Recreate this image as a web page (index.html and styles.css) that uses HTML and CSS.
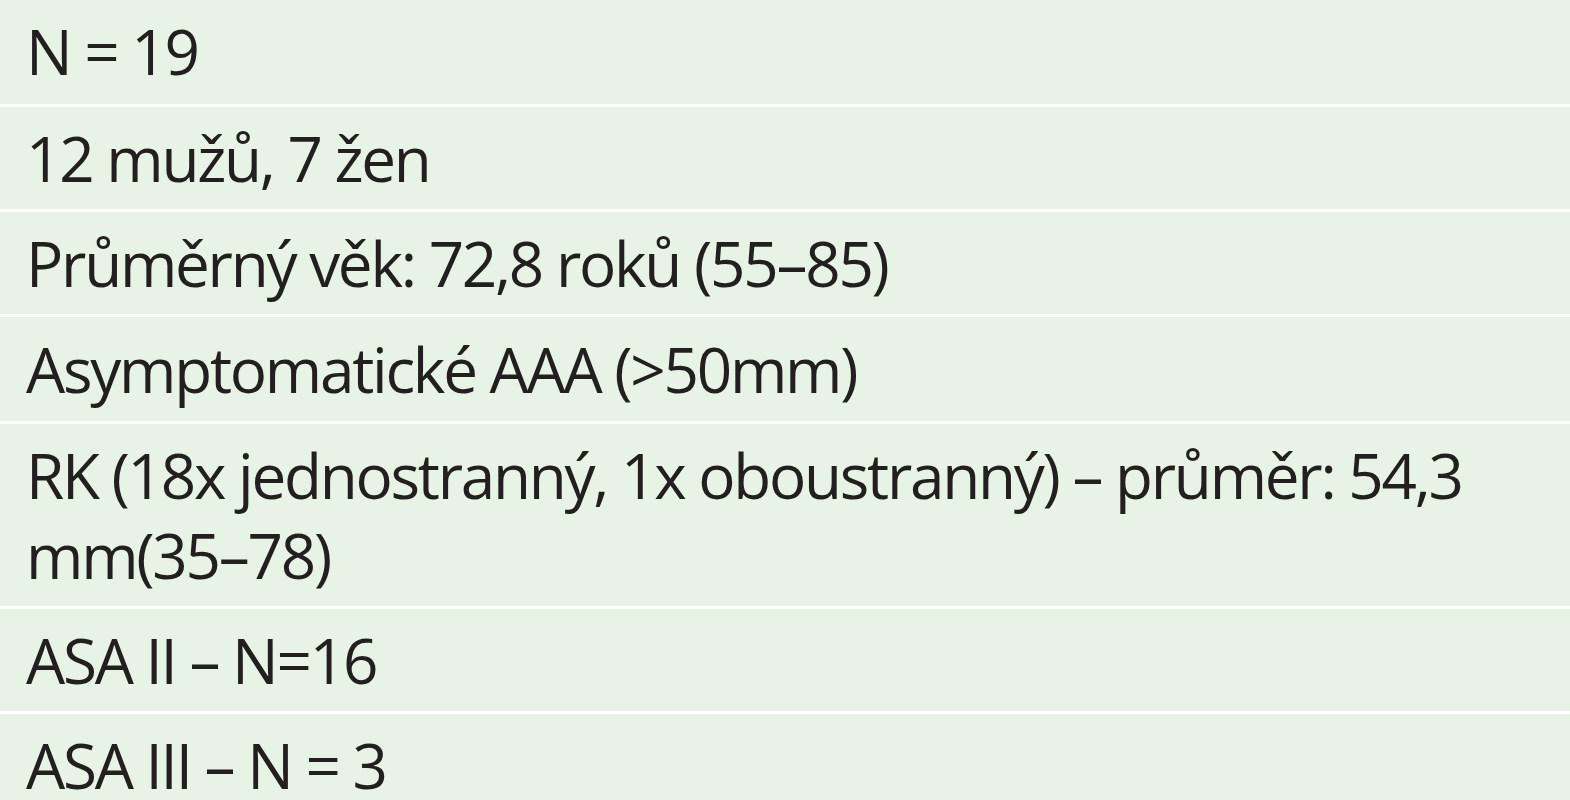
FILE: index.html
```html
<!DOCTYPE html>
<html lang="cs">
<head>
<meta charset="utf-8">
<title>Charakteristika souboru</title>
<link rel="stylesheet" href="styles.css">
</head>
<body>
<div class="table">
  <div class="row">N = 19</div>
  <div class="row">12 mužů, 7 žen</div>
  <div class="row">Průměrný věk: 72,8 roků (55–85)</div>
  <div class="row">Asymptomatické AAA (&gt;50mm)</div>
  <div class="row">RK (18x jednostranný, 1x oboustranný) – průměr: 54,3<br>mm(35–78)</div>
  <div class="row">ASA II – N=16</div>
  <div class="row">ASA III – N = 3</div>
</div>
</body>
</html>
```
FILE: styles.css
```css
html, body {
  margin: 0;
  padding: 0;
  background: #e7f3e4;
}
body {
  font-family: "Open Sans", "Noto Sans", sans-serif;
  color: #231f20;
  overflow: hidden;
  height: 800px;
}
.table {
  display: flex;
  flex-direction: column;
}
.row {
  background: #e7f3e4;
  border-bottom: 3px solid #ffffff;
  padding: 11px 20px 11px 26px;
  font-size: 62px;
  line-height: 80px;
  letter-spacing: -2.25px;
  white-space: nowrap;
}
.row:nth-child(1) {
  padding-bottom: 13px;
}
.row:nth-child(4) {
  padding-top: 12px;
  padding-bottom: 12px;
}
```
